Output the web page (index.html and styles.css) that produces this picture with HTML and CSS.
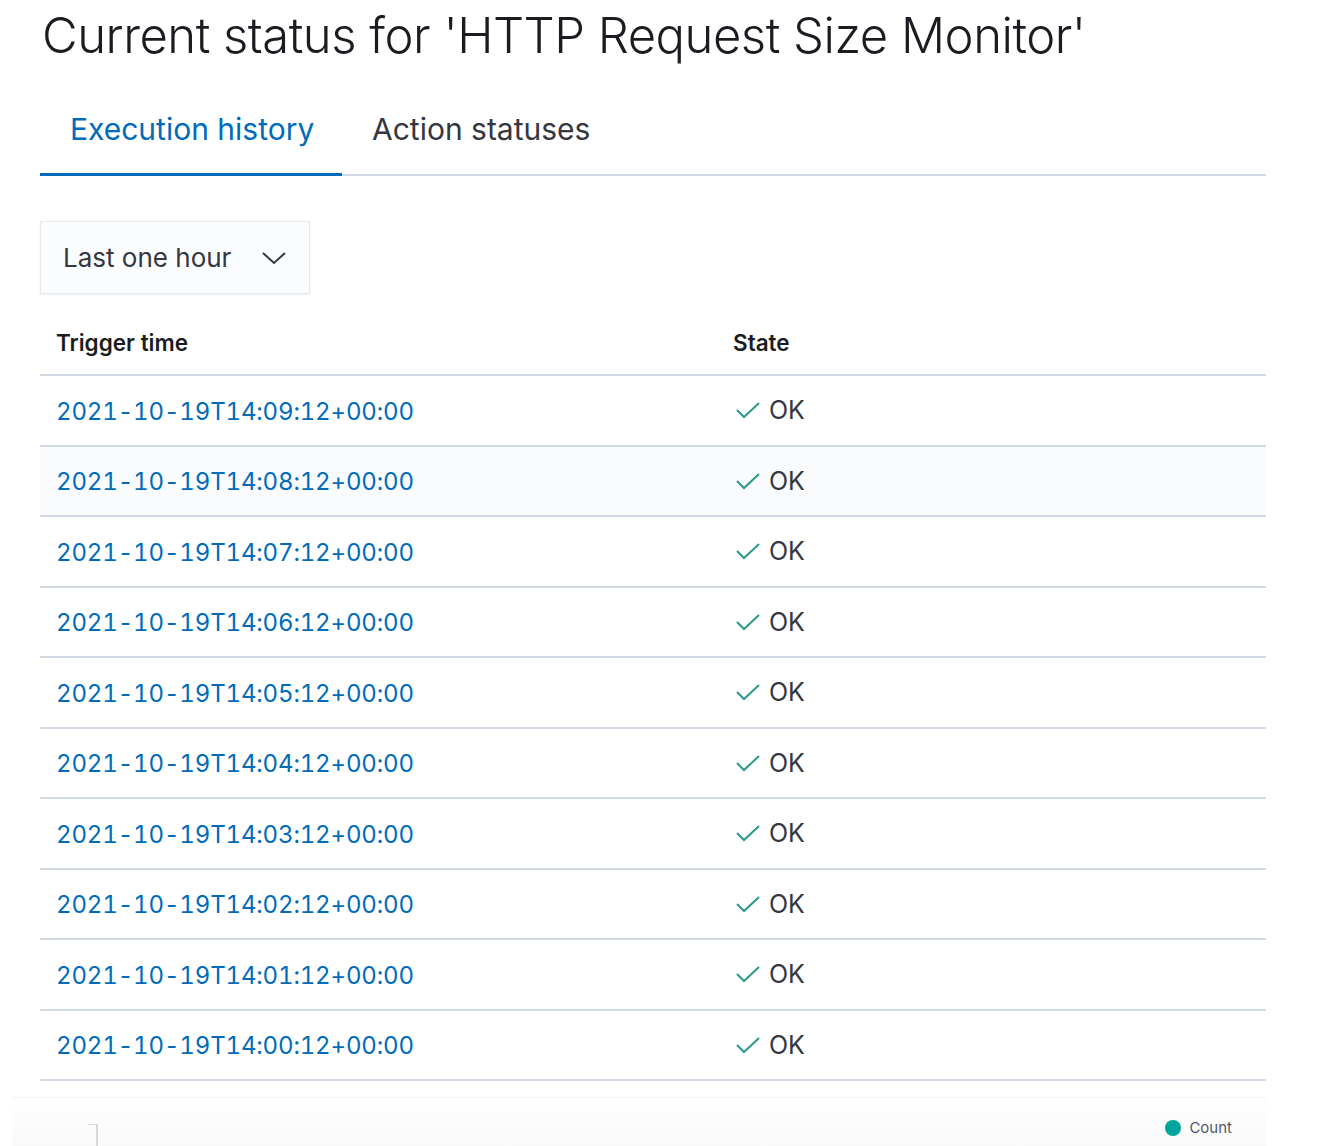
FILE: index.html
```html
<!DOCTYPE html>
<html>
<head>
<meta charset="utf-8">
<link rel="stylesheet" href="styles.css">
</head>
<body>
<div class="page">
  <h1 class="title">Current status for 'HTTP Request Size Monitor'</h1>
  <div class="tabs">
    <div class="tab active">Execution history</div>
    <div class="tab">Action statuses</div>
  </div>
  <div class="select">
    <span>Last one hour</span>
    <svg class="chev" width="26" height="16" viewBox="0 0 26 16"><path d="M2 3 L13 13 L24 3" fill="none" stroke="#343741" stroke-width="2"/></svg>
  </div>
  <div class="table">
    <div class="row head">
      <div class="c1">Trigger time</div>
      <div class="c2">State</div>
    </div>
    <div class="row"><div class="c1 link">2021-10-19T14:09:12+00:00</div><div class="c2"><svg class="chk" width="26" height="18" viewBox="0 0 26 18"><path d="M2 9 L9 16 L24 2" fill="none" stroke="#2a9a8b" stroke-width="2"/></svg>OK</div></div>
    <div class="row hover"><div class="c1 link">2021-10-19T14:08:12+00:00</div><div class="c2"><svg class="chk" width="26" height="18" viewBox="0 0 26 18"><path d="M2 9 L9 16 L24 2" fill="none" stroke="#2a9a8b" stroke-width="2"/></svg>OK</div></div>
    <div class="row"><div class="c1 link">2021-10-19T14:07:12+00:00</div><div class="c2"><svg class="chk" width="26" height="18" viewBox="0 0 26 18"><path d="M2 9 L9 16 L24 2" fill="none" stroke="#2a9a8b" stroke-width="2"/></svg>OK</div></div>
    <div class="row"><div class="c1 link">2021-10-19T14:06:12+00:00</div><div class="c2"><svg class="chk" width="26" height="18" viewBox="0 0 26 18"><path d="M2 9 L9 16 L24 2" fill="none" stroke="#2a9a8b" stroke-width="2"/></svg>OK</div></div>
    <div class="row"><div class="c1 link">2021-10-19T14:05:12+00:00</div><div class="c2"><svg class="chk" width="26" height="18" viewBox="0 0 26 18"><path d="M2 9 L9 16 L24 2" fill="none" stroke="#2a9a8b" stroke-width="2"/></svg>OK</div></div>
    <div class="row"><div class="c1 link">2021-10-19T14:04:12+00:00</div><div class="c2"><svg class="chk" width="26" height="18" viewBox="0 0 26 18"><path d="M2 9 L9 16 L24 2" fill="none" stroke="#2a9a8b" stroke-width="2"/></svg>OK</div></div>
    <div class="row"><div class="c1 link">2021-10-19T14:03:12+00:00</div><div class="c2"><svg class="chk" width="26" height="18" viewBox="0 0 26 18"><path d="M2 9 L9 16 L24 2" fill="none" stroke="#2a9a8b" stroke-width="2"/></svg>OK</div></div>
    <div class="row"><div class="c1 link">2021-10-19T14:02:12+00:00</div><div class="c2"><svg class="chk" width="26" height="18" viewBox="0 0 26 18"><path d="M2 9 L9 16 L24 2" fill="none" stroke="#2a9a8b" stroke-width="2"/></svg>OK</div></div>
    <div class="row"><div class="c1 link">2021-10-19T14:01:12+00:00</div><div class="c2"><svg class="chk" width="26" height="18" viewBox="0 0 26 18"><path d="M2 9 L9 16 L24 2" fill="none" stroke="#2a9a8b" stroke-width="2"/></svg>OK</div></div>
    <div class="row"><div class="c1 link">2021-10-19T14:00:12+00:00</div><div class="c2"><svg class="chk" width="26" height="18" viewBox="0 0 26 18"><path d="M2 9 L9 16 L24 2" fill="none" stroke="#2a9a8b" stroke-width="2"/></svg>OK</div></div>
  </div>
</div>
<div class="chart">
  <div class="bracket"></div>
  <div class="legend"><span class="dot"></span>Count</div>
</div>
</body>
</html>
```
FILE: styles.css
```css
html, body { margin: 0; padding: 0; background: #fff; }
body { font-family: Inter, "Noto Sans", sans-serif; color: #343741; overflow: hidden; height: 1146px; }
.page { padding-left: 40px; width: 1226px; }
.title {
  margin: 0; padding: 6px 0 0 2px;
  font-size: 49px; font-weight: 300; line-height: 60px;
  color: #1a1c21; letter-spacing: -0.5px;
}
.tabs {
  display: flex; margin-top: 34px;
  border-bottom: 2px solid #d3dae6; height: 74px;
}
.tab {
  font-size: 30px; line-height: 34px; padding: 12px 30px 0 30px;
  color: #343741; box-sizing: border-box; white-space: nowrap;
}
.tab.active { color: #006bb8; border-bottom: 3px solid #006bb8; margin-bottom: -2px; width: 302px; }
.select {
  margin-top: 45px; width: 270px; height: 73px; box-sizing: border-box;
  background: #fbfcfd; border: 1px solid #e4e8ef;
  box-shadow: 0 1px 2px rgba(0,0,0,0.06);
  display: flex; align-items: center; padding: 0 22px;
  font-size: 26px; color: #343741; justify-content: space-between;
}
.table { margin-top: 14px; }
.row {
  display: flex; align-items: center; height: 70.5px; box-sizing: border-box;
  border-bottom: 2px solid #d3dae6;
}
.row.head { height: 68px; font-weight: 600; font-size: 22.5px; color: #1a1c21; padding-top: 3px; }
.row.hover { background: #fafbfd; }
.c1 { width: 677px; padding-left: 16px; }
.c2 { display: flex; align-items: center; font-size: 25px; color: #343741; }
.row.head .c2 { font-size: 22.5px; color: #1a1c21; }
.link { color: #006bb8; font-size: 24px; font-variant-numeric: tabular-nums; padding-top: 2px; letter-spacing: -0.15px; }
.chk { margin-right: 8px; margin-left: 2px; }
.chart {
  margin: 16px 0 0 12px; width: 1254px; height: 60px;
  border-top: 1px solid #f1f2f4;
  background: linear-gradient(#ffffff, #f8f8f9);
  position: relative;
}
.bracket {
  position: absolute; left: 76px; top: 26px; width: 8px; height: 40px;
  border-top: 1px solid #d8d8d8; border-right: 2px solid #d8d8d8;
}
.legend {
  position: absolute; right: 34px; top: 20px;
  display: flex; align-items: center; font-size: 15px; color: #535966;
}
.dot { width: 16px; height: 16px; border-radius: 50%; background: #00a69b; margin-right: 8px; }
```
